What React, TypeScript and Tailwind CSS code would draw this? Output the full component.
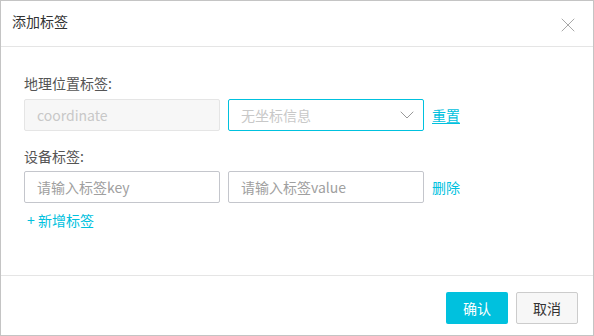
import { X, ChevronDown } from "lucide-react";

const font = { fontFamily: '"Noto Sans CJK SC", "Noto Sans", sans-serif' };

export default function App() {
  return (
    <div
      className="w-[594px] h-[336px] bg-white border border-[#c4c4c4] flex flex-col text-[#333]"
      style={font}
    >
      {/* Header */}
      <div className="h-[46px] shrink-0 flex items-center justify-between pl-[11px] pr-[13px] border-b border-[#e5e5e5]">
        <span className="text-[14px] leading-[20px] -mt-[6px]">添加标签</span>
        <X className="h-[24px] w-[24px] text-[#a8a8a8] mt-[2px]" strokeWidth={1} />
      </div>

      {/* Body */}
      <div className="flex-1 pl-[23px] pt-[26px]">
        <div className="text-[14px] leading-[20px] text-[#555]">地理位置标签:</div>
        <div className="flex items-center mt-[6px] gap-[8px]">
          <div className="w-[196px] h-[32px] rounded-[2px] border border-[#e5e5e5] bg-[#f7f7f7] flex items-center px-[12px] text-[14px] text-[#c8c8c8]">
            coordinate
          </div>
          <div className="w-[196px] h-[32px] rounded-[2px] border border-[#00c1de] bg-white flex items-center justify-between pl-[12px] pr-[4px] text-[14px] text-[#c8c8c8]">
            <span>无坐标信息</span>
            <ChevronDown className="h-[24px] w-[24px] text-[#999]" strokeWidth={1} />
          </div>
          <a className="text-[14px] text-[#00c1de] underline underline-offset-2">重置</a>
        </div>

        <div className="text-[14px] leading-[20px] text-[#555] mt-[15px]">设备标签:</div>
        <div className="flex items-center mt-[5px] gap-[8px]">
          <div className="w-[196px] h-[32px] rounded-[2px] border border-[#c4c6cc] bg-white flex items-center px-[12px] text-[14px] text-[#a0a0a0]">
            请输入标签key
          </div>
          <div className="w-[196px] h-[32px] rounded-[2px] border border-[#c4c6cc] bg-white flex items-center px-[12px] text-[14px] text-[#a0a0a0]">
            请输入标签value
          </div>
          <a className="text-[14px] text-[#00c1de]">删除</a>
        </div>

        <div className="mt-[7px] pl-[3px] text-[14px] leading-[20px] text-[#00c1de]">+ 新增标签</div>
      </div>

      {/* Footer */}
      <div className="h-[60px] shrink-0 border-t border-[#e5e5e5] flex justify-end items-start pt-[16px] pr-[15px] gap-[8px]">
        <button className="w-[62px] h-[32px] rounded-[2px] bg-[#00c1de] text-white text-[14px]">确认</button>
        <button className="w-[62px] h-[32px] rounded-[2px] border border-[#cccccc] bg-[#f7f7f7] text-[#333] text-[14px]">
          取消
        </button>
      </div>
    </div>
  );
}
